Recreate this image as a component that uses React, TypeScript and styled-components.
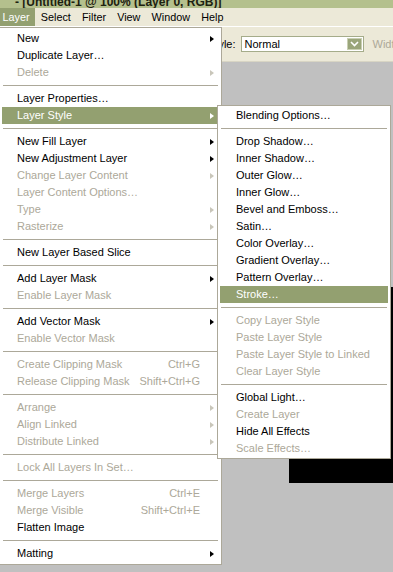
import styled, {createGlobalStyle} from "styled-components";

const GlobalStyle = createGlobalStyle`
  html, body {
    margin: 0;
    padding: 0;
    background: #c0c0c0;
  }
  body {
    font-family: 'Liberation Sans', Arial, sans-serif;
    font-size: 11px;
  }
`;

const Screen = styled.div`
  position: relative;
  width: 393px;
  height: 572px;
  overflow: hidden;
  display: flex;
  flex-direction: column;
  background: #c0c0c0;
`;

const TitleBar = styled.div`
  height: 8px;
  flex-shrink: 0;
  display: flex;
  align-items: flex-end;
  overflow: hidden;
  background: #b4c08d;
  padding-left: 15px;
`;

const TitleText = styled.span`
  font-weight: bold;
  font-size: 12px;
  line-height: 12px;
  color: #1d2110;
  white-space: nowrap;
`;

const MenuBar = styled.div`
  height: 18px;
  flex-shrink: 0;
  display: flex;
  align-items: stretch;
  background: #ece9d8;
  border-bottom: 1px solid #ffffff;
  margin-left: -3px;
`;

const MenuTitle = styled.div<{ $open?: boolean }>`
  padding: 0 5.6px;
  font-size: 10.8px;
  line-height: 18px;
  color: ${p => (p.$open ? "#ffffff" : "#000000")};
  background: ${p => (p.$open ? "#93a070" : "transparent")};
`;

const OptionsBar = styled.div`
  height: 34px;
  flex-shrink: 0;
  display: flex;
  align-items: center;
  overflow: hidden;
  padding-left: 208px;
  background: #ece9d8;
  border-bottom: 1px solid #d8d5c4;
`;

const OptionLabel = styled.span<{ $muted?: boolean }>`
  flex-shrink: 0;
  color: ${p => (p.$muted ? "#aca899" : "#000000")};
  white-space: nowrap;
  margin-left: ${p => (p.$muted ? "9px" : "0")};
`;

const Select = styled.div`
  flex-shrink: 0;
  width: 123px;
  height: 16px;
  box-sizing: border-box;
  margin-left: 5px;
  display: flex;
  align-items: center;
  justify-content: space-between;
  background: #ffffff;
  border: 1px solid #a5ac8a;
  padding: 0 1px 0 3px;
  color: #000000;
`;

const SelectButton = styled.div`
  width: 15px;
  height: 12px;
  background: #9aa57a;
  border: 1px solid #c9cfb2;
  box-sizing: border-box;
  display: flex;
  align-items: center;
  justify-content: center;
`;

const Workspace = styled.div`
  flex: 1;
  display: flex;
  padding: 225px 0 0 289px;
`;

const Canvas = styled.div`
  flex: 1;
  height: 196px;
  background: #000000;
`;

const Menu = styled.div<{ $left: number; $top: number; $width: number; $padY: number }>`
  position: absolute;
  left: ${p => p.$left}px;
  top: ${p => p.$top}px;
  width: ${p => p.$width}px;
  box-sizing: border-box;
  background: #ffffff;
  border: 1px solid #aca899;
  padding: ${p => p.$padY}px 2px;
  display: flex;
  flex-direction: column;
`;

const Item = styled.div<{ $active?: boolean; $disabled?: boolean; $indent: number }>`
  height: 17px;
  line-height: 17px;
  display: flex;
  align-items: center;
  padding-left: ${p => p.$indent}px;
  white-space: nowrap;
  background: ${p => (p.$active ? "#93a070" : "transparent")};
  color: ${p => (p.$active ? "#ffffff" : p.$disabled ? "#aca899" : "#000000")};
`;

const ItemLabel = styled.span`
  flex: 1;
`;

const Shortcut = styled.span`
  text-align: right;
`;

const ArrowCell = styled.span`
  width: 19px;
  display: flex;
  align-items: center;
  padding-left: 10px;
  box-sizing: border-box;
`;

const Arrow = styled.span<{ $color: string }>`
  width: 0;
  height: 0;
  border-top: 3.5px solid transparent;
  border-bottom: 3.5px solid transparent;
  border-left: 4px solid ${p => p.$color};
`;

const Separator = styled.div`
  height: 1px;
  margin: 4px 1px;
  background: #aca899;
`;

type Entry =
  | "sep"
  | { label: string; arrow?: boolean; disabled?: boolean; active?: boolean; shortcut?: string };

const layerMenu: Entry[] = [
  {label: "New", arrow: true},
  {label: "Duplicate Layer…"},
  {label: "Delete", arrow: true, disabled: true},
  "sep",
  {label: "Layer Properties…"},
  {label: "Layer Style", arrow: true, active: true},
  "sep",
  {label: "New Fill Layer", arrow: true},
  {label: "New Adjustment Layer", arrow: true},
  {label: "Change Layer Content", arrow: true, disabled: true},
  {label: "Layer Content Options…", disabled: true},
  {label: "Type", arrow: true, disabled: true},
  {label: "Rasterize", arrow: true, disabled: true},
  "sep",
  {label: "New Layer Based Slice"},
  "sep",
  {label: "Add Layer Mask", arrow: true},
  {label: "Enable Layer Mask", disabled: true},
  "sep",
  {label: "Add Vector Mask", arrow: true},
  {label: "Enable Vector Mask", disabled: true},
  "sep",
  {label: "Create Clipping Mask", disabled: true, shortcut: "Ctrl+G"},
  {label: "Release Clipping Mask", disabled: true, shortcut: "Shift+Ctrl+G"},
  "sep",
  {label: "Arrange", arrow: true, disabled: true},
  {label: "Align Linked", arrow: true, disabled: true},
  {label: "Distribute Linked", arrow: true, disabled: true},
  "sep",
  {label: "Lock All Layers In Set…", disabled: true},
  "sep",
  {label: "Merge Layers", disabled: true, shortcut: "Ctrl+E"},
  {label: "Merge Visible", disabled: true, shortcut: "Shift+Ctrl+E"},
  {label: "Flatten Image"},
  "sep",
  {label: "Matting", arrow: true},
];

const styleMenu: Entry[] = [
  {label: "Blending Options…"},
  "sep",
  {label: "Drop Shadow…"},
  {label: "Inner Shadow…"},
  {label: "Outer Glow…"},
  {label: "Inner Glow…"},
  {label: "Bevel and Emboss…"},
  {label: "Satin…"},
  {label: "Color Overlay…"},
  {label: "Gradient Overlay…"},
  {label: "Pattern Overlay…"},
  {label: "Stroke…", active: true},
  "sep",
  {label: "Copy Layer Style", disabled: true},
  {label: "Paste Layer Style", disabled: true},
  {label: "Paste Layer Style to Linked", disabled: true},
  {label: "Clear Layer Style", disabled: true},
  "sep",
  {label: "Global Light…"},
  {label: "Create Layer", disabled: true},
  {label: "Hide All Effects"},
  {label: "Scale Effects…", disabled: true},
];

const MenuEntries = ({entries, indent, withRight}: { entries: Entry[]; indent: number; withRight: boolean }) => (
  <>
    {entries.map((e, i) => {
      if (e === "sep") return <Separator key={i}/>;
      const arrowColor = e.active ? "#ffffff" : e.disabled ? "#c9c6ba" : "#000000";
      return (
        <Item key={i} $active={e.active} $disabled={e.disabled} $indent={indent}>
          <ItemLabel>{e.label}</ItemLabel>
          {e.shortcut && <Shortcut>{e.shortcut}</Shortcut>}
          {withRight && <ArrowCell>{e.arrow && <Arrow $color={arrowColor}/>}</ArrowCell>}
        </Item>
      );
    })}
  </>
);

const App = () => {
  return (
    <Screen>
      <GlobalStyle/>
      <TitleBar>
        <TitleText>- [Untitled-1 @ 100% (Layer 0, RGB)]</TitleText>
      </TitleBar>
      <MenuBar>
        <MenuTitle $open>Layer</MenuTitle>
        <MenuTitle>Select</MenuTitle>
        <MenuTitle>Filter</MenuTitle>
        <MenuTitle>View</MenuTitle>
        <MenuTitle>Window</MenuTitle>
        <MenuTitle>Help</MenuTitle>
      </MenuBar>
      <OptionsBar>
        <OptionLabel>Style:</OptionLabel>
        <Select>
          <span>Normal</span>
          <SelectButton>
            <svg width="9" height="6" viewBox="0 0 9 6">
              <path d="M1 1 L4.5 4.5 L8 1" stroke="#ffffff" strokeWidth="1.6" fill="none"/>
            </svg>
          </SelectButton>
        </Select>
        <OptionLabel $muted>Width:</OptionLabel>
      </OptionsBar>
      <Workspace>
        <Canvas/>
      </Workspace>

      {/* Layer 메뉴 */}
      <Menu $left={-1} $top={27} $width={223} $padY={2}>
        <MenuEntries entries={layerMenu} indent={15} withRight/>
      </Menu>

      {/* Layer Style 서브메뉴 */}
      <Menu $left={217} $top={105} $width={174} $padY={1}>
        <MenuEntries entries={styleMenu} indent={16} withRight={false}/>
      </Menu>
    </Screen>
  );
};

export default App;
